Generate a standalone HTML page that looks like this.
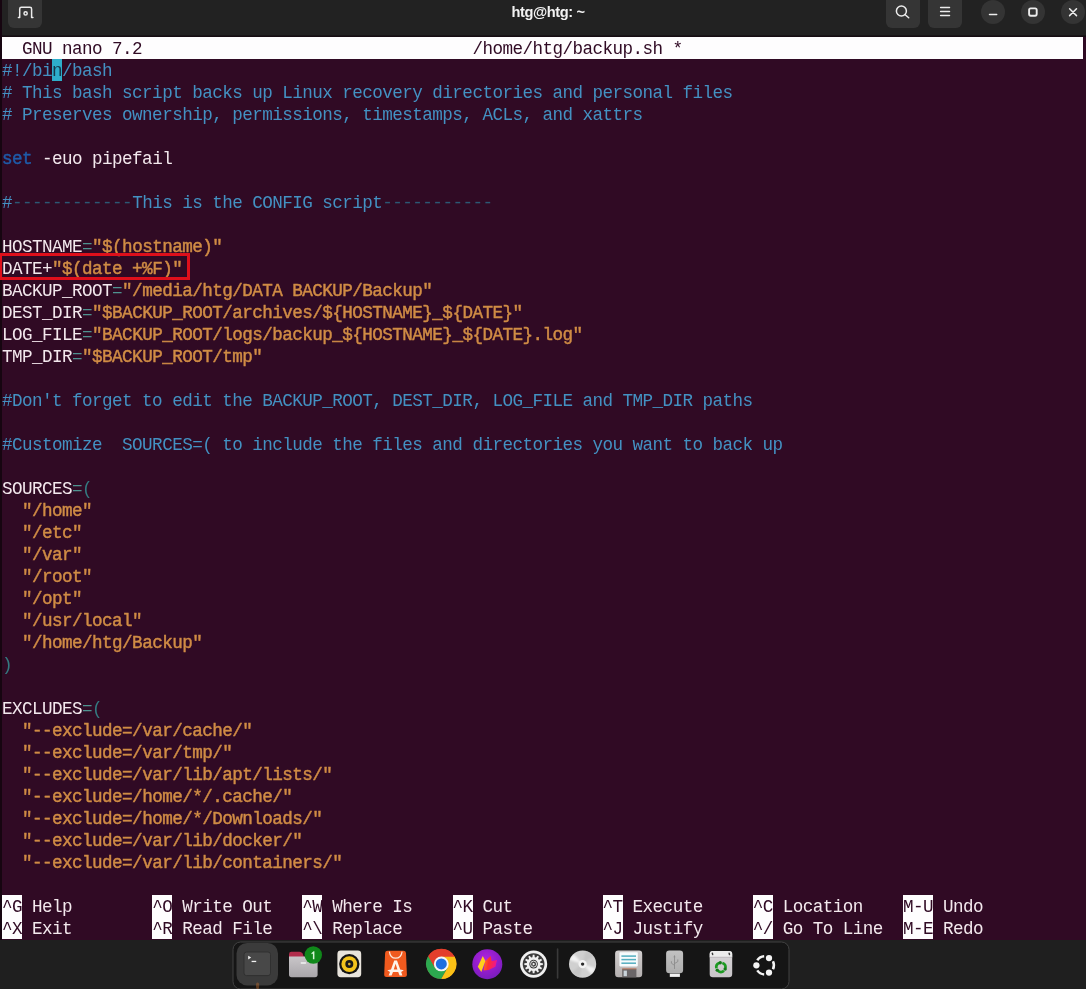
<!DOCTYPE html>
<html>
<head>
<meta charset="utf-8">
<style>
*{margin:0;padding:0;box-sizing:border-box}
html,body{width:1086px;height:989px;overflow:hidden;background:#1f1f1f}
body{position:relative;font-family:"Liberation Sans",sans-serif}
#titlebar{position:absolute;left:0;top:0;width:1086px;height:37px;background:#222222}
#titlebar .edge{position:absolute;left:0;top:35px;width:1086px;height:2px;background:linear-gradient(#1b1b1b,#150810)}
.tbtn{position:absolute;top:-8px;height:35.5px;background:#353535;border-radius:6px}
.cbtn{position:absolute;top:0;width:24px;height:24px;border-radius:12px;background:#343434}
#title{will-change:transform;position:absolute;left:0;top:2px;width:1096px;text-align:center;color:#f2f2f2;font-weight:bold;font-size:14.6px;line-height:20px;letter-spacing:-0.4px}
#rows{position:absolute;left:0;top:0;width:1086px;height:989px;will-change:transform}
#term{position:absolute;left:0;top:37px;width:1086px;height:903px;background:#300a24}
#leftedge{position:absolute;left:0;top:0;width:2px;height:940px;background:#160510}
.row{position:absolute;left:2px;height:22px;line-height:25px;white-space:pre;font-family:"Liberation Mono",monospace;font-size:17.6px;letter-spacing:-0.55px;color:#f3e8ed}
.c{color:#4391c2}
.s{color:#d08c45;-webkit-text-stroke:0.45px #d08c45}
.o{color:#4f9290}
.p{color:#347a80}
.b{color:#1f5ba8;-webkit-text-stroke:0.45px #1f5ba8}
.d{color:#2c5874}
.hl{position:absolute;background:#fefdfe;height:22px}
.k{color:#300a24}
.cur{background:#2eaecb;color:#143a4e;display:inline-block;height:22px;vertical-align:top}
#redbox{position:absolute;left:-1.2px;top:253.2px;width:190.9px;height:27px;border:3.5px solid #de0f1b}
#dock{position:absolute;left:233px;top:941px;width:556px;height:60px;background:#141414;border:1px solid #2e2e2e;border-radius:9px}
</style>
</head>
<body>
<div id="titlebar">
  <div class="edge"></div>
  <div class="tbtn" style="left:8px;width:34px"></div>
  <div class="tbtn" style="left:886px;width:34px"></div>
  <div class="tbtn" style="left:928px;width:34px"></div>
  <div class="cbtn" style="left:981px"></div>
  <div class="cbtn" style="left:1021px"></div>
  <div class="cbtn" style="left:1061px"></div>
  <div id="title">htg@htg: ~</div>
  <svg width="1086" height="37" style="position:absolute;left:0;top:0" fill="none" stroke="#ececec" stroke-width="1.5" stroke-linecap="round" stroke-linejoin="round">
    <!-- new tab icon -->
    <path d="M18.4 17.5 L19.7 17.5 L19.7 9 Q19.7 7.3 21.4 7.3 L29.9 7.3 Q31.6 7.3 31.6 9 L31.6 17.5 L32.9 17.5"/>
    <circle cx="25.6" cy="13.4" r="1.6" stroke-width="1.5"/>
    <!-- search -->
    <circle cx="901.4" cy="11" r="5.0"/>
    <path d="M905.2 14.8 L908.7 17.8"/>
    <!-- menu -->
    <path d="M940.6 7.5 H949.5 M940.6 11.5 H949.5 M940.6 15.5 H949.5"/>
    <!-- minimize -->
    <path d="M989.5 14.4 H996.7"/>
    <!-- maximize -->
    <rect x="1029.1" y="8.4" width="7.6" height="7.3" rx="1.6" stroke-width="1.9"/>
    <!-- close -->
    <path d="M1069.6 8.7 L1076.5 15.6 M1076.5 8.7 L1069.6 15.6"/>
  </svg>
</div>
<div id="term"></div>
<div id="leftedge"></div>
<div id="rows">
<div class="hl" style="left:2px;top:37px;width:1081px"></div>
<div class="row k" style="top:37px">  GNU nano 7.2                                 /home/htg/backup.sh *</div>
<div class="row" style="top:59px"><span class="c">#!/bi</span><span class="cur">n</span><span class="c">/bash</span></div>
<div class="row" style="top:81px"><span class="c"># This bash script backs up Linux recovery directories and personal files</span></div>
<div class="row" style="top:103px"><span class="c"># Preserves ownership, permissions, timestamps, ACLs, and xattrs</span></div>
<div class="row" style="top:147px"><span class="b">set</span> -euo pipefail</div>
<div class="row" style="top:191px"><span class="c">#</span><span class="d">------------</span><span class="c">This is the CONFIG script</span><span class="d">-----------</span></div>
<div class="row" style="top:235px">HOSTNAME<span class="o">=</span><span class="s">"$(hostname)"</span></div>
<div class="row" style="top:257px">DATE+<span class="s">"$(date +%F)"</span></div>
<div class="row" style="top:279px">BACKUP_ROOT<span class="o">=</span><span class="s">"/media/htg/DATA BACKUP/Backup"</span></div>
<div class="row" style="top:301px">DEST_DIR<span class="o">=</span><span class="s">"$BACKUP_ROOT/archives/${HOSTNAME}_${DATE}"</span></div>
<div class="row" style="top:323px">LOG_FILE<span class="o">=</span><span class="s">"BACKUP_ROOT/logs/backup_${HOSTNAME}_${DATE}.log"</span></div>
<div class="row" style="top:345px">TMP_DIR<span class="o">=</span><span class="s">"$BACKUP_ROOT/tmp"</span></div>
<div class="row" style="top:389px"><span class="c">#Don't forget to edit the BACKUP_ROOT, DEST_DIR, LOG_FILE and TMP_DIR paths</span></div>
<div class="row" style="top:433px"><span class="c">#Customize  SOURCES=( to include the files and directories you want to back up</span></div>
<div class="row" style="top:477px">SOURCES<span class="o">=</span><span class="p">(</span></div>
<div class="row" style="top:499px">  <span class="s">"/home"</span></div>
<div class="row" style="top:521px">  <span class="s">"/etc"</span></div>
<div class="row" style="top:543px">  <span class="s">"/var"</span></div>
<div class="row" style="top:565px">  <span class="s">"/root"</span></div>
<div class="row" style="top:587px">  <span class="s">"/opt"</span></div>
<div class="row" style="top:609px">  <span class="s">"/usr/local"</span></div>
<div class="row" style="top:631px">  <span class="s">"/home/htg/Backup"</span></div>
<div class="row" style="top:653px"><span class="p">)</span></div>
<div class="row" style="top:697px">EXCLUDES<span class="o">=</span><span class="p">(</span></div>
<div class="row" style="top:719px">  <span class="s">"--exclude=/var/cache/"</span></div>
<div class="row" style="top:741px">  <span class="s">"--exclude=/var/tmp/"</span></div>
<div class="row" style="top:763px">  <span class="s">"--exclude=/var/lib/apt/lists/"</span></div>
<div class="row" style="top:785px">  <span class="s">"--exclude=/home/*/.cache/"</span></div>
<div class="row" style="top:807px">  <span class="s">"--exclude=/home/*/Downloads/"</span></div>
<div class="row" style="top:829px">  <span class="s">"--exclude=/var/lib/docker/"</span></div>
<div class="row" style="top:851px">  <span class="s">"--exclude=/var/lib/containers/"</span></div>
<div class="hl" style="left:2.0px;top:895px;width:20.0px"></div>
<div class="row k" style="left:2.0px;top:895px">^G</div>
<div class="row" style="left:32.0px;top:895px">Help</div>
<div class="hl" style="left:152.2px;top:895px;width:20.0px"></div>
<div class="row k" style="left:152.2px;top:895px">^O</div>
<div class="row" style="left:182.2px;top:895px">Write Out</div>
<div class="hl" style="left:302.3px;top:895px;width:20.0px"></div>
<div class="row k" style="left:302.3px;top:895px">^W</div>
<div class="row" style="left:332.3px;top:895px">Where Is</div>
<div class="hl" style="left:452.5px;top:895px;width:20.0px"></div>
<div class="row k" style="left:452.5px;top:895px">^K</div>
<div class="row" style="left:482.5px;top:895px">Cut</div>
<div class="hl" style="left:602.6px;top:895px;width:20.0px"></div>
<div class="row k" style="left:602.6px;top:895px">^T</div>
<div class="row" style="left:632.6px;top:895px">Execute</div>
<div class="hl" style="left:752.8px;top:895px;width:20.0px"></div>
<div class="row k" style="left:752.8px;top:895px">^C</div>
<div class="row" style="left:782.8px;top:895px">Location</div>
<div class="hl" style="left:902.9px;top:895px;width:30.0px"></div>
<div class="row k" style="left:902.9px;top:895px">M-U</div>
<div class="row" style="left:942.9px;top:895px">Undo</div>
<div class="hl" style="left:2.0px;top:917px;width:20.0px"></div>
<div class="row k" style="left:2.0px;top:917px">^X</div>
<div class="row" style="left:32.0px;top:917px">Exit</div>
<div class="hl" style="left:152.2px;top:917px;width:20.0px"></div>
<div class="row k" style="left:152.2px;top:917px">^R</div>
<div class="row" style="left:182.2px;top:917px">Read File</div>
<div class="hl" style="left:302.3px;top:917px;width:20.0px"></div>
<div class="row k" style="left:302.3px;top:917px">^\</div>
<div class="row" style="left:332.3px;top:917px">Replace</div>
<div class="hl" style="left:452.5px;top:917px;width:20.0px"></div>
<div class="row k" style="left:452.5px;top:917px">^U</div>
<div class="row" style="left:482.5px;top:917px">Paste</div>
<div class="hl" style="left:602.6px;top:917px;width:20.0px"></div>
<div class="row k" style="left:602.6px;top:917px">^J</div>
<div class="row" style="left:632.6px;top:917px">Justify</div>
<div class="hl" style="left:752.8px;top:917px;width:20.0px"></div>
<div class="row k" style="left:752.8px;top:917px">^/</div>
<div class="row" style="left:782.8px;top:917px">Go To Line</div>
<div class="hl" style="left:902.9px;top:917px;width:30.0px"></div>
<div class="row k" style="left:902.9px;top:917px">M-E</div>
<div class="row" style="left:942.9px;top:917px">Redo</div>
<div id="redbox"></div>
</div>
<svg width="1086" height="50" viewBox="0 939 1086 50" style="position:absolute;left:0;top:939px">
<defs>
<linearGradient id="gfold" x1="0" y1="0" x2="0" y2="1"><stop offset="0" stop-color="#c9c6c9"/><stop offset="1" stop-color="#a9a6aa"/></linearGradient>
<radialGradient id="gpur" cx="0.45" cy="0.35" r="0.75"><stop offset="0" stop-color="#b024e0"/><stop offset="0.6" stop-color="#8d1cc8"/><stop offset="1" stop-color="#6f1fb8"/></radialGradient>
<linearGradient id="gcd" x1="0" y1="0" x2="1" y2="1"><stop offset="0" stop-color="#c4c4c4"/><stop offset="0.28" stop-color="#f4f4f4"/><stop offset="0.42" stop-color="#cfcfcf"/><stop offset="0.6" stop-color="#d6d6d6"/><stop offset="0.74" stop-color="#f6f6f6"/><stop offset="0.9" stop-color="#c8c8c8"/></linearGradient>
<linearGradient id="gfl" x1="0" y1="0" x2="0" y2="1"><stop offset="0" stop-color="#d2cfcf"/><stop offset="1" stop-color="#b4b0b0"/></linearGradient>
<linearGradient id="gusb" x1="0" y1="0" x2="0" y2="1"><stop offset="0" stop-color="#c2c2c2"/><stop offset="1" stop-color="#aeaeae"/></linearGradient>
<linearGradient id="gtr" x1="0" y1="0" x2="0" y2="1"><stop offset="0" stop-color="#d8d6d8"/><stop offset="1" stop-color="#c8c4c8"/></linearGradient>
<filter id="bl" x="-20%" y="-20%" width="140%" height="140%"><feGaussianBlur stdDeviation="0.9"/></filter><clipPath id="cdc"><circle cx="582.6" cy="964.1" r="13.6"/></clipPath>
<linearGradient id="gflame" x1="0" y1="0" x2="1" y2="0.2"><stop offset="0" stop-color="#ff7a1e"/><stop offset="0.45" stop-color="#ff3030"/><stop offset="1" stop-color="#ee1590"/></linearGradient>
</defs>
<rect x="233" y="942" width="556" height="47" rx="7.5" fill="#151515" stroke="#424242" stroke-width="1"/>
<rect x="236.5" y="943" width="41.5" height="42.4" rx="10.5" fill="#3b3b3b"/>
<rect x="244" y="952" width="26.5" height="23.6" rx="2.5" fill="#484848" stroke="#303030" stroke-width="1"/>
<path d="M248.2 955.8 L251.2 957.6 L248.2 959.4 Z" fill="#f2f2f2"/>
<rect x="251.6" y="960.8" width="4.6" height="1.3" fill="#f2f2f2"/>
<ellipse cx="257.6" cy="986" rx="1.6" ry="3.4" fill="#b8682c" opacity="0.45"/>
<path d="M289 957 L289 954.2 Q289 951.8 291.4 951.8 L299.5 951.8 Q301.5 951.8 302.6 953.6 L304 957 Z" fill="#b22d4c"/>
<path d="M289 956.4 L315 956.4 Q317.6 956.4 317.6 959 L317.6 974.6 Q317.6 977.2 315 977.2 L291.6 977.2 Q289 977.2 289 974.6 Z" fill="url(#gfold)"/>
<rect x="300.6" y="962.2" width="5.6" height="1.5" rx="0.7" fill="#f4f4f4"/>
<circle cx="313.3" cy="955" r="8.7" fill="#10881a"/>
<path d="M311.3 953.2 L313.6 951.2 L314.4 951.2 L314.4 959.2 L312.9 959.2 L312.9 953.4 L311.8 954.3 Z" fill="#d8f5d8"/>
<rect x="337.4" y="950.6" width="23.8" height="26.6" rx="3.4" fill="#e8e4dc"/>
<circle cx="349.3" cy="964.1" r="10.2" fill="#141414"/>
<circle cx="349.3" cy="964.1" r="7.9" fill="#f3c31c"/>
<circle cx="349.3" cy="964.1" r="4" fill="#1a1a1a"/>
<circle cx="349.3" cy="964.1" r="1.3" fill="#d8b030"/>
<path d="M387.6 950.7 L403.4 950.7 Q405.8 950.7 406 953 L406.9 974.4 Q406.9 976.9 404.4 976.9 L386.6 976.9 Q384.1 976.9 384.2 974.4 L385.1 953 Q385.3 950.7 387.6 950.7 Z" fill="#f05a1e"/>
<path d="M389.4 951.6 Q390.2 958.2 395.6 958.2 Q401.2 958.2 402.1 951.6" fill="none" stroke="#fbe9dc" stroke-width="1.2"/>
<path d="M395.6 960.4 L397 960.4 L400.2 969.4 L403.8 970.2 L401.2 972 L402.4 975.6 L399.6 975.6 L398.2 972 L393 972 L391.6 975.6 L388.6 975.6 L390 972 L387.3 970.2 L391 969.4 L394.2 960.4 Z M395.6 963.8 L393.8 969.4 L397.4 969.4 Z" fill="#fdf3ea" fill-rule="evenodd"/>
<circle cx="441.3" cy="963.9" r="14.9" fill="#e33e2b"/>
<path d="M441.30 956.50 L454.58 956.50 A15.2 15.2 0 0 1 441.07 979.10 L447.71 967.60 Z" fill="#fbc116"/>
<path d="M447.71 967.60 L441.07 979.10 A15.2 15.2 0 0 1 428.25 956.10 L434.89 967.60 Z" fill="#2ca94f"/>
<path d="M434.89 967.60 L428.25 956.10 A15.2 15.2 0 0 1 454.58 956.50 L441.30 956.50 Z" fill="#e33e2b"/>
<circle cx="441.3" cy="963.9" r="7.4" fill="#f6f6f6"/>
<circle cx="441.3" cy="963.9" r="5.5" fill="#1d6fe0"/>
<circle cx="487.3" cy="964.2" r="15" fill="url(#gpur)"/>
<path d="M490.6 956 L491.7 961.3 L497 960 L495.4 966.8 L488.4 970 L483.6 970.6 L485 961.4 Z" fill="url(#gflame)"/>
<path d="M482.8 956 L485.4 961 L481.3 972 L477.8 966.7 Z" fill="#ffcf1c"/>
<circle cx="533.6" cy="964.1" r="13.6" fill="#f0f0f0"/>
<circle cx="533.6" cy="964.1" r="10.9" fill="#3a3a3a"/>
<path d="M532.76 954.84 L534.44 954.84 L534.78 957.30 L535.98 957.62 L537.51 955.66 L538.96 956.50 L538.02 958.80 L538.90 959.68 L541.20 958.74 L542.04 960.19 L540.08 961.72 L540.40 962.92 L542.86 963.26 L542.86 964.94 L540.40 965.28 L540.08 966.48 L542.04 968.01 L541.20 969.46 L538.90 968.52 L538.02 969.40 L538.96 971.70 L537.51 972.54 L535.98 970.58 L534.78 970.90 L534.44 973.36 L532.76 973.36 L532.42 970.90 L531.22 970.58 L529.69 972.54 L528.24 971.70 L529.18 969.40 L528.30 968.52 L526.00 969.46 L525.16 968.01 L527.12 966.48 L526.80 965.28 L524.34 964.94 L524.34 963.26 L526.80 962.92 L527.12 961.72 L525.16 960.19 L526.00 958.74 L528.30 959.68 L529.18 958.80 L528.24 956.50 L529.69 955.66 L531.22 957.62 L532.42 957.30 Z" fill="#f0f0f0"/>
<circle cx="533.6" cy="964.1" r="4.3" fill="#3a3a3a"/>
<circle cx="533.6" cy="964.1" r="3" fill="none" stroke="#f0f0f0" stroke-width="0.9"/>
<path d="M532.6 962.5 L535.4 964.1 L532.6 965.7 Z" fill="#f0f0f0"/>
<rect x="556.8" y="948.3" width="1.6" height="30.4" rx="0.8" fill="#3a3a3a"/>
<circle cx="582.6" cy="964.1" r="13.6" fill="#d0d0d0"/>
<g clip-path="url(#cdc)"><g filter="url(#bl)">
<path d="M582.6 964.1 L569.67 959.90 A13.6 13.6 0 0 1 573.50 953.99 Z" fill="#f7f7f7" opacity="0.9"/>
<path d="M582.6 964.1 L595.53 968.30 A13.6 13.6 0 0 1 591.70 974.21 Z" fill="#f7f7f7" opacity="0.9"/>
<path d="M582.6 964.1 L579.54 977.35 A13.6 13.6 0 0 1 571.74 972.28 Z" fill="#c2c2c2" opacity="0.8"/>
<path d="M582.6 964.1 L585.66 950.85 A13.6 13.6 0 0 1 593.46 955.92 Z" fill="#c2c2c2" opacity="0.8"/>
</g></g>
<circle cx="582.6" cy="964.1" r="4.2" fill="#f4f4f4"/>
<circle cx="582.6" cy="964.1" r="1.7" fill="#2a2a2a"/>
<rect x="615.1" y="950.6" width="27.1" height="26.7" rx="3.2" fill="url(#gfl)"/>
<rect x="619.4" y="952.2" width="18.4" height="14.2" rx="0.8" fill="#f7fbfc"/>
<rect x="621.4" y="955.35" width="14.6" height="1.5" fill="#54aebf"/>
<rect x="621.4" y="958.85" width="14.6" height="1.5" fill="#54aebf"/>
<rect x="621.4" y="962.45" width="14.6" height="1.5" fill="#54aebf"/>
<rect x="622.2" y="968.8" width="14.2" height="8.5" fill="#6a6668"/>
<rect x="622.2" y="968.4" width="14.2" height="0.9" fill="#c27a5a"/>
<rect x="623.6" y="970.6" width="3.3" height="5.6" fill="#c9d3da"/>
<rect x="666.1" y="950.6" width="17" height="22.6" rx="3.2" fill="url(#gusb)"/>
<rect x="669.8" y="973.6" width="10.1" height="3.3" fill="#f2f2f2"/>
<g fill="none" stroke="#8c8c8c" stroke-width="0.9" stroke-linecap="round"><path d="M674.5 956 L674.5 968.6"/><path d="M674.5 965.4 L671.4 963.2 L671.4 961.6"/><path d="M674.5 963.6 L677.8 961.6 L677.8 959.8"/></g>
<path d="M673.4 957.2 L674.5 955.2 L675.6 957.2 Z" fill="#8c8c8c"/>
<rect x="709.7" y="950.9" width="22.5" height="26.4" rx="3.2" fill="url(#gtr)"/>
<path d="M709.7 957 L709.7 954.1 Q709.7 950.9 712.9 950.9 L729 950.9 Q732.2 950.9 732.2 954.1 L732.2 957 Z" fill="#ececec"/>
<rect x="709.7" y="956.8" width="22.5" height="0.8" fill="#b8b4b8"/>
<ellipse cx="712.5" cy="953.9" rx="0.8" ry="1.5" fill="#3a3a3a" transform="rotate(-15 712.5 953.9)"/>
<ellipse cx="729.3" cy="953.9" rx="0.8" ry="1.5" fill="#3a3a3a" transform="rotate(-15 729.3 953.9)"/>
<path d="M722.32 962.93 A4.6 4.6 0 0 1 725.43 968.10" fill="none" stroke="#1d9a22" stroke-width="2.7"/>
<circle cx="725.17" cy="969.02" r="1.7" fill="#127a18"/>
<path d="M723.98 970.72 A4.6 4.6 0 0 1 717.94 970.82" fill="none" stroke="#1d9a22" stroke-width="2.7"/>
<circle cx="717.28" cy="970.13" r="1.7" fill="#127a18"/>
<path d="M716.40 968.26 A4.6 4.6 0 0 1 719.33 962.98" fill="none" stroke="#1d9a22" stroke-width="2.7"/>
<circle cx="720.26" cy="962.74" r="1.7" fill="#127a18"/>
<circle cx="756.40" cy="965.30" r="3.15" fill="#f4f4f4"/>
<circle cx="769.00" cy="958.03" r="3.15" fill="#f4f4f4"/>
<circle cx="769.00" cy="972.57" r="3.15" fill="#f4f4f4"/>
<path d="M757.26 960.21 A9.1 9.1 0 0 1 764.17 956.22" fill="none" stroke="#f4f4f4" stroke-width="2.5"/>
<path d="M772.98 961.31 A9.1 9.1 0 0 1 772.98 969.29" fill="none" stroke="#f4f4f4" stroke-width="2.5"/>
<path d="M764.17 974.38 A9.1 9.1 0 0 1 757.26 970.39" fill="none" stroke="#f4f4f4" stroke-width="2.5"/>
</svg>
</body>
</html>
